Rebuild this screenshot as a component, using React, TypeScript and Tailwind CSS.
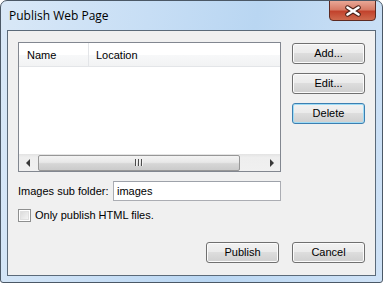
import React from 'react';

const ui = { fontFamily: '"Liberation Sans", Arial, sans-serif' };

const Btn = ({ label, focused }: { label: string; focused?: boolean }) => (
  <button
    className={`w-[73px] h-[21px] rounded-[3px] border text-[11px] text-black leading-none flex items-center justify-center bg-[linear-gradient(to_bottom,#f2f2f2_0%,#ebebeb_45%,#dddddd_50%,#cfcfcf_100%)] ${
      focused
        ? 'border-[#3c7fb1] shadow-[inset_0_0_0_1px_#9fdcf6]'
        : 'border-[#707070] shadow-[inset_0_0_0_1px_#fbfbfb]'
    }`}
    style={ui}
  >
    {label}
  </button>
);

export default function App() {
  return (
    <div className="w-[383px] h-[283px] relative rounded-t-[7px] rounded-b-[3px] border border-[#4b5866] bg-[linear-gradient(100deg,#d9e8f7_0%,#c7def5_35%,#b9d6f2_60%,#cfe2f6_100%)] overflow-hidden">
      {/* title bar */}
      <div className="h-[29px] flex items-center pl-[8px]">
        <span className="text-[12px] text-black" style={{ fontFamily: '"Open Sans", "Noto Sans", sans-serif' }}>
          Publish Web Page
        </span>
      </div>

      {/* close button */}
      <div className="absolute top-[-1px] left-[328px] w-[47px] h-[21px] rounded-b-[4px] border border-[#5c2a22] bg-[linear-gradient(to_bottom,#e8a796_0%,#d77b66_45%,#c2432d_55%,#cf6a4e_100%)] flex items-center justify-center">
        <svg width="18" height="12" viewBox="0 0 18 12">
          <path d="M3.5 2.5 L14.5 9.5 M14.5 2.5 L3.5 9.5" stroke="#4a2018" strokeWidth="4.5" strokeLinecap="round" />
          <path d="M3.5 2.5 L14.5 9.5 M14.5 2.5 L3.5 9.5" stroke="#ffffff" strokeWidth="2.6" strokeLinecap="round" />
        </svg>
      </div>

      {/* client area */}
      <div className="ml-[6px] w-[369px] h-[246px] border border-[#5b6a79] bg-[#f0f0f0] flex flex-col pl-[10px] pt-[11px] pr-[10px]" style={ui}>
        <div className="flex">
          <div className="w-[263px] flex flex-col">
            {/* list view */}
            <div className="h-[130px] border border-[#828790] bg-white flex flex-col">
              <div className="h-[24px] flex border-b border-[#e3e5e8] bg-[linear-gradient(to_bottom,#ffffff_0%,#ffffff_50%,#f7f8f9_51%,#f2f3f4_100%)] text-[11px] text-black">
                <div className="w-[70px] flex items-center pl-[8px] pt-[2px] border-r border-[#e3e5e8]">Name</div>
                <div className="flex items-center pl-[7px] pt-[2px]">Location</div>
              </div>
              <div className="flex-1" />
              {/* horizontal scrollbar */}
              <div className="h-[17px] flex items-center bg-[linear-gradient(to_bottom,#e3e3e3_0%,#eeeeee_20%,#f0f0f0_100%)]">
                <div className="w-[17px] h-full flex items-center justify-center">
                  <div className="w-0 h-0 border-y-[4px] border-y-transparent border-r-[4px] border-r-[#3a3a3a]" />
                </div>
                <div className="w-[2px]" />
                <div className="w-[202px] h-[16px] rounded-[2px] border border-[#979797] bg-[linear-gradient(to_bottom,#f3f3f3_0%,#e8e8e8_45%,#d6d6d6_55%,#cbcbcb_100%)] flex items-center justify-center gap-[1px]">
                  <div className="w-[2px] h-[7px] bg-[#4d4d4d] border-r border-[#f2f2f2]" />
                  <div className="w-[2px] h-[7px] bg-[#4d4d4d] border-r border-[#f2f2f2]" />
                  <div className="w-[2px] h-[7px] bg-[#4d4d4d] border-r border-[#f2f2f2]" />
                </div>
                <div className="flex-1" />
                <div className="w-[17px] h-full flex items-center justify-center">
                  <div className="w-0 h-0 border-y-[4px] border-y-transparent border-l-[4px] border-l-[#3a3a3a]" />
                </div>
              </div>
            </div>

            {/* images sub folder */}
            <div className="mt-[9px] h-[20px] flex items-center text-[11px] text-black">
              <span className="w-[95px]">Images sub folder:</span>
              <div className="flex-1 h-[20px] border border-[#abadb3] border-t-[#9ea2aa] bg-white flex items-center pl-[3px]">
                images
              </div>
            </div>

            {/* checkbox */}
            <div className="mt-[8px] h-[13px] flex items-center text-[11px] text-black">
              <div className="w-[13px] h-[13px] border border-[#8e8f8f] bg-white p-[1px]">
                <div className="w-full h-full bg-[linear-gradient(135deg,#dcdcdc_0%,#f4f4f4_100%)] border border-[#e0e0e0]" />
              </div>
              <span className="ml-[4px]">Only publish HTML files.</span>
            </div>
          </div>

          {/* side buttons */}
          <div className="ml-[11px] mt-[1px] flex flex-col gap-[9px]">
            <Btn label="Add..." />
            <Btn label="Edit..." />
            <Btn label="Delete" focused />
          </div>
        </div>

        {/* bottom buttons */}
        <div className="mt-[20px] flex justify-end gap-[13px]">
          <Btn label="Publish" />
          <Btn label="Cancel" />
        </div>
      </div>
    </div>
  );
}
